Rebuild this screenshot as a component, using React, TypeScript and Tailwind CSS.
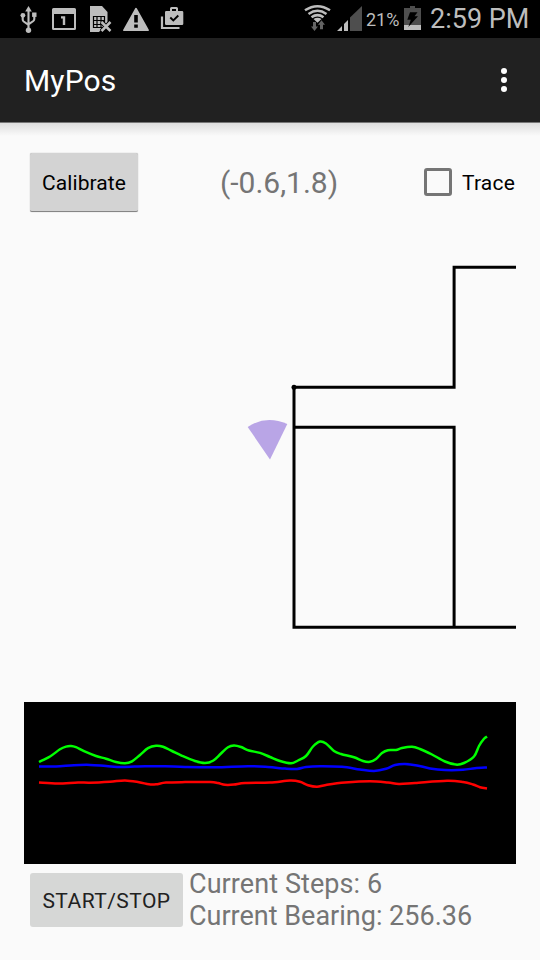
import React from "react";

type Point = [number, number];

function smoothPath(points: Point[]): string {
  let d = `M${points[0][0]} ${points[0][1]}`;
  for (let i = 0; i < points.length - 1; i++) {
    const p0 = points[Math.max(i - 1, 0)];
    const p1 = points[i];
    const p2 = points[i + 1];
    const p3 = points[Math.min(i + 2, points.length - 1)];
    d += `C${p1[0] + (p2[0] - p0[0]) / 6} ${p1[1] + (p2[1] - p0[1]) / 6} ${p2[0] - (p3[0] - p1[0]) / 6} ${p2[1] - (p3[1] - p1[1]) / 6} ${p2[0]} ${p2[1]}`;
  }
  return d;
}

const GREEN: Point[] = [
  [39, 762], [50, 756.5], [60, 749.3], [66, 746.6], [71, 746], [76, 747.2], [84, 751.2], [96, 756], [106, 758.7],
  [116, 762], [125, 763.3], [132, 761.3], [140, 755], [148, 748.2], [156, 745.8], [163, 746.8], [172, 751], [182, 755.8],
  [195, 761], [205, 763], [213, 760.8], [221, 753.5], [228, 747.2], [234, 745.5], [241, 747], [249, 750.5], [260, 752.9],
  [270, 757], [280, 761], [291, 763.3], [298, 760.5], [306, 756], [313, 746.5], [320, 741.5], [326, 743.5], [334, 751],
  [341, 754], [354, 757.3], [363, 761], [370, 761.8], [376, 759], [382, 753], [388, 750.2], [396, 750], [402, 748],
  [412, 746.8], [420, 749], [432, 754.5], [445, 761.5], [456, 764.6], [464, 763], [474, 756.5], [479, 746], [484, 738.8], [487, 736.5],
];

const BLUE: Point[] = [
  [39, 766.4], [56, 766.5], [74, 765.2], [90, 764.9], [106, 766], [122, 767], [145, 766.2], [165, 766.3], [185, 767],
  [215, 767.3], [248, 766.2], [268, 767], [285, 768.6], [297, 769], [306, 767], [320, 766.2], [342, 766.8], [360, 769.5],
  [374, 771], [386, 768.8], [395, 765], [405, 764], [417, 765.4], [430, 768.4], [445, 770], [463, 769.8], [475, 768.2], [487, 767.5],
];

const RED: Point[] = [
  [39, 782.6], [58, 783.5], [78, 782.5], [90, 782.7], [110, 781.7], [125, 780.4], [139, 782.2], [149, 784.3], [156, 784.3],
  [166, 782.6], [185, 782.1], [210, 782], [218, 783], [225, 784.8], [234, 784.6], [245, 783], [270, 782.5], [290, 780.6],
  [300, 781.7], [308, 785.2], [317, 786.7], [326, 784.9], [345, 782.5], [370, 781.2], [388, 782.5], [399, 784],
  [415, 783], [447, 780.8], [463, 782], [473, 784.5], [480, 787.3], [487, 788.4],
];

function StatusIcons() {
  return (
    <svg className="block h-[38px] w-[190px] shrink-0" viewBox="0 0 190 38" fill="#bdbdbd">
      {/* USB */}
      <path d="M28.500 9V29M22.700 16v3.500q0 1.200 1 2l4.800 3.300M34.300 16v3q0 1.200-1 2l-4.800 3.300" fill="none" stroke="#bdbdbd" strokeWidth="2.100" />
      <path d="M28.500 6l3.300 5.500h-6.600z" />
      <circle cx="28.500" cy="30.200" r="2.700" />
      <circle cx="22.900" cy="15.300" r="2.400" />
      <rect x="32.100" y="12.500" width="4.400" height="4.400" />
      {/* Calendar */}
      <path fillRule="evenodd" d="M53.500 8h21q1.500 0 1.500 1.500v19q0 1.500-1.500 1.500h-21q-1.500 0-1.500-1.500v-19q0-1.500 1.500-1.500zM54 14v14h20V14z" />
      <path d="M61 16.300h4.200v8.700h-2.400v-6.500H61z" />
      {/* SIM missing */}
      <path d="M90 6h12l5.500 6v10l-8.500 10h-9z" />
      <path d="M93.500 16.500h11v11h-11zM97 16.500v11M101 16.500v11M93.500 20.500h11M93.500 24.500h11" fill="none" stroke="#000" strokeWidth="1.200" />
      <path d="M101.500 22l9 9M110.500 22l-9 9" stroke="#000" strokeWidth="4.500" />
      <path d="M101.500 22l9 9M110.500 22l-9 9" stroke="#bdbdbd" strokeWidth="2.500" />
      {/* Warning */}
      <path d="M136 8.700L148 30.200H124z" stroke="#bdbdbd" strokeWidth="1.800" strokeLinejoin="round" />
      <path d="M134.200 15h3.600v7.500h-3.600zM134.200 24.500h3.600v3.200h-3.600z" fill="#000" />
      {/* Work check */}
      <path fillRule="evenodd" d="M170 11V8.500q0-1.500 1.500-1.500h5q1.500 0 1.500 1.500V11h4q1.300 0 1.300 1.300v11.400q0 1.300-1.300 1.300h-15.700q-1.300 0-1.300-1.300V12.300q0-1.300 1.300-1.300zM172 9v2h4V9z" />
      <path d="M170.300 17.500l3 3 5-5" fill="none" stroke="#000" strokeWidth="1.900" />
      <path d="M162 16.500V28h17.500" fill="none" stroke="#bdbdbd" strokeWidth="2.200" />
    </svg>
  );
}

function WifiSignal() {
  return (
    <svg className="block h-[38px] w-[62px] shrink-0" viewBox="302 0 62 38">
      <g fill="none" stroke="#bdbdbd" strokeWidth="2.500">
        <path d="M305 10.300Q317.500 2 330 10.300" />
        <path d="M308.500 14Q317.500 7.700 326.500 14" />
        <path d="M311.500 17.300Q317.500 13 323.500 17.300" />
      </g>
      <path d="M313.500 19q4-2.700 8 0l-4 3.700z" fill="#bdbdbd" />
      <path d="M313 22h3v4.500h2l-3.500 4.500-3.500-4.500h2zM320 29.300h3v-4.500h2l-3.500-4.500-3.500 4.500h2z" fill="#646464" />
      <path d="M350 17.500L362 6v25h-12z" fill="#4e4e4e" />
      <path d="M337 31l5-5v5zM344 24l4-4v11h-4z" fill="#bdbdbd" />
    </svg>
  );
}

function Battery() {
  return (
    <svg className="block h-[38px] w-[18px] shrink-0" viewBox="404 0 18 38">
      <path d="M410 6h5v2h6v22h-17V8h6z" fill="#4e4e4e" />
      <path d="M404 25h17v5h-17z" fill="#bdbdbd" />
      <path d="M410 12.300h7.500l-3 4h3.500l-9.700 10.700 2.500-7.200h-3.500z" fill="#000" />
    </svg>
  );
}

function FloorMap() {
  return (
    <svg className="block h-[490px] w-[492px]" viewBox="24 212 492 490" fill="none" stroke="#000" strokeWidth="3">
      <path d="M516 267.300H454.100V387.300H294V627.300H516M294 427.300H454.100V627.300" />
      <circle cx="294" cy="387.300" r="2.500" fill="#000" stroke="none" />
      <path d="M270 459.500L247.700 427Q266 414.500 287.300 424z" fill="#b9a5e6" stroke="none" />
    </svg>
  );
}

function SensorChart() {
  return (
    <svg className="block h-[162px] w-[492px] bg-black" viewBox="24 702 492 162" fill="none" strokeWidth="2.500">
      <path stroke="#f00" d={smoothPath(RED)} />
      <path stroke="#00f" d={smoothPath(BLUE)} />
      <path stroke="#0f0" d={smoothPath(GREEN)} />
    </svg>
  );
}

export default function App() {
  return (
    <div className="flex h-[960px] w-[540px] flex-col overflow-hidden bg-[#fafafa] font-['Roboto','Liberation_Sans',sans-serif]">
      <div className="flex h-[38px] shrink-0 items-center bg-black text-[#bdbdbd]">
        <StatusIcons />
        <div className="ml-[112px] flex items-center">
          <WifiSignal />
          <span className="ml-[2px] w-[36px] whitespace-nowrap pt-[2px] text-[18px] leading-[36px]">21%</span>
          <span className="ml-[2px]"><Battery /></span>
          <span className="ml-[8px] whitespace-nowrap text-[27px] leading-[38px]">2:59 PM</span>
        </div>
      </div>
      <header className="flex h-[84px] shrink-0 items-center justify-between bg-[#212121] pl-6 pr-[33px] text-white">
        <h1 className="pt-[2px] text-[30px] leading-[36px] tracking-[0.15px]">MyPos</h1>
        <div className="flex flex-col gap-[3px]">
          <i className="size-[6px] rounded-full bg-white" />
          <i className="size-[6px] rounded-full bg-white" />
          <i className="size-[6px] rounded-full bg-white" />
        </div>
      </header>
      <div className="h-[14px] shrink-0 border-t border-[#777] bg-linear-to-b from-[#dedede] to-[#fafafa]" />
      <main className="flex flex-col px-6">
        <div className="flex h-[76px] items-start pt-[16px]">
          <button className="ml-[6px] mt-px h-[59px] w-[108px] rounded-[2px] border-b border-[#858585] bg-[#d3d3d3] pt-[3px] text-[21px] tracking-[0.1px] text-black shadow-[0_0_1px_#999]">Calibrate</button>
          <span className="ml-[82px] w-[120px] whitespace-nowrap pt-px text-[30px] leading-[60px] text-[#757575]">(-0.6,1.8)</span>
          <label className="ml-[84px] flex h-[60px] items-center whitespace-nowrap text-[21px] text-black">
            <span className="mr-[10px] size-[28px] rounded-[3px] border-[3px] border-[#757575]" />
            <span className="pt-[3px] tracking-[0.2px]">Trace</span>
          </label>
        </div>
        <FloorMap />
        <SensorChart />
        <div className="flex">
          <button className="ml-[6px] mt-[9px] h-[54px] w-[153px] rounded-[3px] bg-[#d6d7d6] pt-[3px] text-[21px] tracking-[0.45px] text-[#212121]">START/STOP</button>
          <div className="ml-[6px] mt-[4px] whitespace-nowrap text-[27px] leading-[32px] text-[#757575]">
            <p className="tracking-[0.08px]">Current Steps: 6</p>
            <p>Current Bearing: 256.36</p>
          </div>
        </div>
      </main>
    </div>
  );
}
